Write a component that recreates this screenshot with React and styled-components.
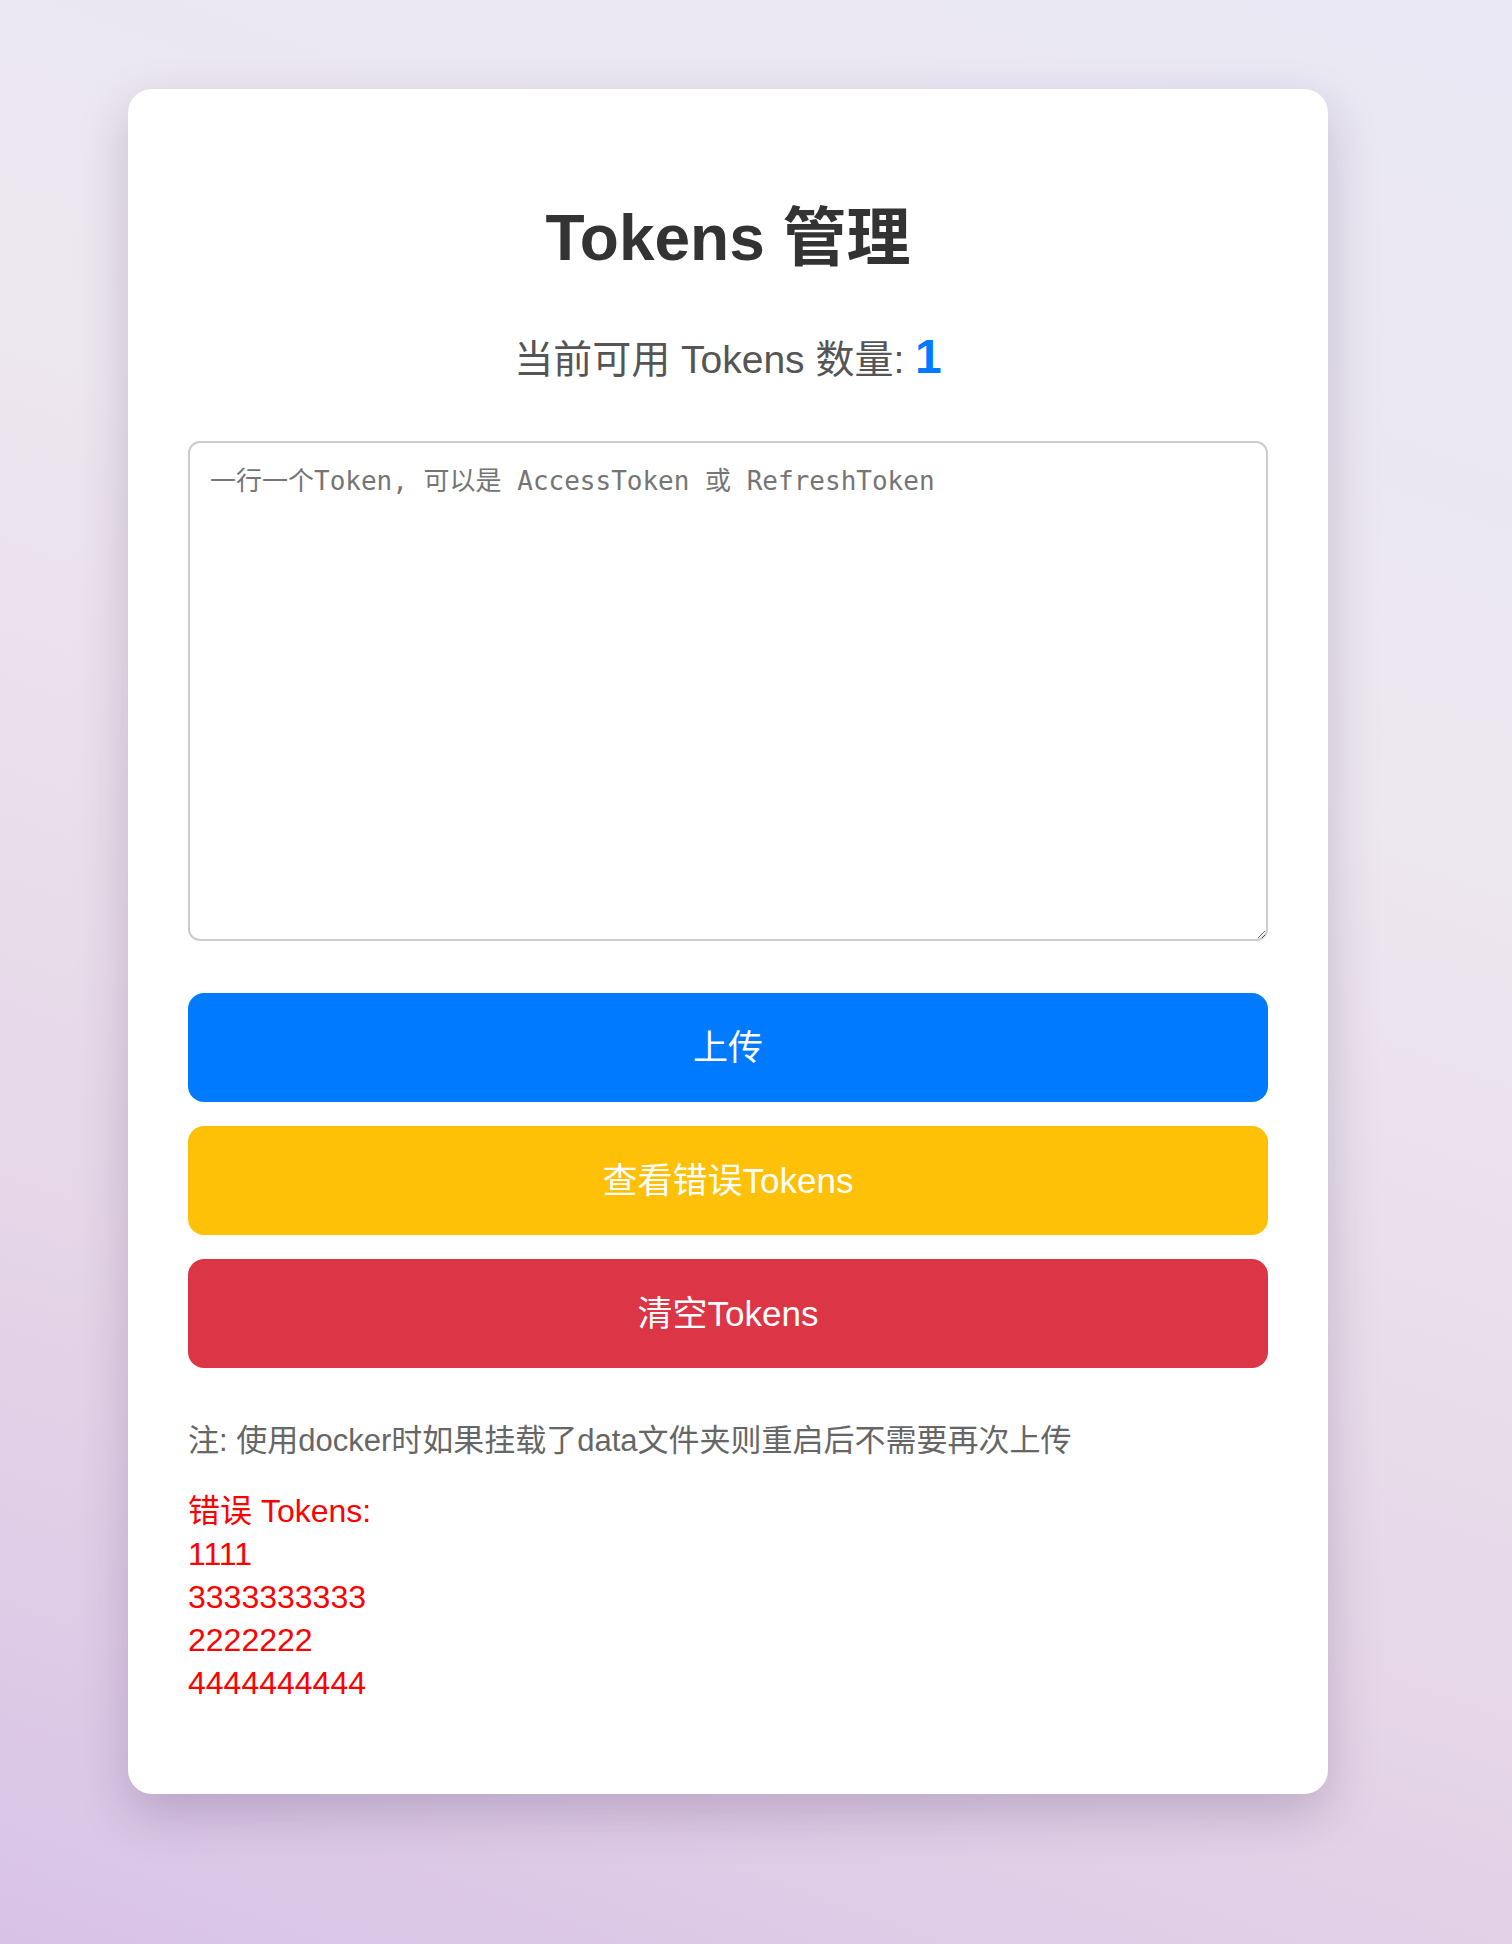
import React, { useState } from 'react';
import styled, { createGlobalStyle } from 'styled-components';

const GlobalStyle = createGlobalStyle`
	html, body {
		margin: 0;
		padding: 0;
	}
	body {
		min-height: 1944px;
		font-family: 'Liberation Sans', 'Noto Sans CJK SC', sans-serif;
		background: linear-gradient(200deg, #e9e8f4 0%, #ede7ef 35%, #e6d6e8 70%, #d8c3e6 100%);
	}
`;

const errorTokens = ['1111', '3333333333', '2222222', '4444444444'];

export default function App() {
	const [tokens, setTokens] = useState('');

	return (
		<>
			<GlobalStyle />
			<Page>
				<Card>
					<Title>Tokens 管理</Title>
					<Count>
						当前可用 Tokens 数量: <CountNumber>1</CountNumber>
					</Count>
					<TokenInput
						value={tokens}
						onChange={e => setTokens(e.target.value)}
						placeholder="一行一个Token, 可以是 AccessToken 或 RefreshToken"
					/>
					<ButtonGroup>
						<ActionButton color="#007bff">上传</ActionButton>
						<ActionButton color="#ffc107">查看错误Tokens</ActionButton>
						<ActionButton color="#dc3545">清空Tokens</ActionButton>
					</ButtonGroup>
					<Note>注: 使用docker时如果挂载了data文件夹则重启后不需要再次上传</Note>
					<ErrorList>
						<div>错误 Tokens:</div>
						{errorTokens.map(token => (
							<div key={token}>{token}</div>
						))}
					</ErrorList>
				</Card>
			</Page>
		</>
	);
}

const Page = styled.div`
	padding: 89px 0 150px 128px;
`;

const Card = styled.div`
	box-sizing: border-box;
	width: 1200px;
	padding: 111px 60px 89px;
	background-color: #ffffff;
	border-radius: 24px;
	box-shadow: 0 20px 50px rgba(60, 30, 80, 0.22);
`;

const Title = styled.h1`
	margin: 0;
	font-size: 64px;
	line-height: 76px;
	font-weight: 700;
	color: #333333;
	text-align: center;
`;

const Count = styled.div`
	margin-top: 57px;
	font-size: 39px;
	line-height: 1.2;
	color: #555555;
	text-align: center;
`;

const CountNumber = styled.span`
	font-size: 48px;
	line-height: 1;
	font-weight: 700;
	color: #007bff;
`;

const TokenInput = styled.textarea`
	display: block;
	box-sizing: border-box;
	width: 100%;
	height: 500px;
	margin-top: 57px;
	padding: 17px 20px;
	border: 2px solid #cccccc;
	border-radius: 12px;
	font-family: 'DejaVu Sans Mono', 'Noto Sans CJK SC', monospace;
	font-size: 26px;
	color: #333333;
	outline: none;

	&::placeholder {
		color: #757575;
	}
`;

const ButtonGroup = styled.div`
	display: flex;
	flex-direction: column;
	gap: 24px;
	margin-top: 52px;
`;

const ActionButton = styled.button`
	height: 109px;
	padding: 0 0 6px;
	border: none;
	border-radius: 16px;
	background-color: ${props => props.color};
	color: #ffffff;
	font-family: 'Liberation Sans', 'Noto Sans CJK SC', sans-serif;
	font-size: 35px;
	cursor: pointer;
`;

const Note = styled.p`
	margin: 51px 0 0;
	font-size: 31px;
	line-height: 43px;
	color: #666666;
`;

const ErrorList = styled.div`
	margin-top: 28px;
	font-size: 32px;
	line-height: 43px;
	color: #ff0000;
`;
